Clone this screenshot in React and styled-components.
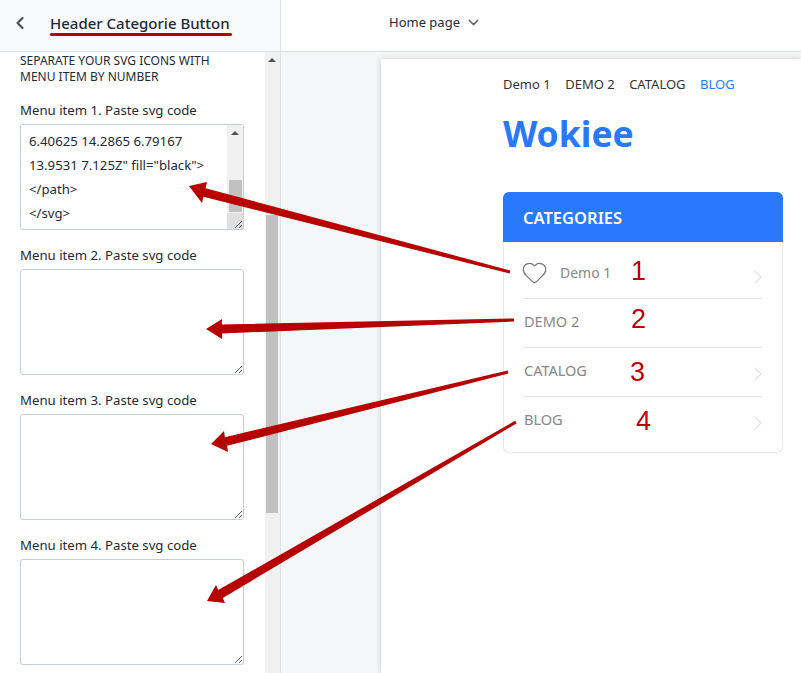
import React, { useEffect, useRef } from 'react'
import styled, { createGlobalStyle } from 'styled-components'
import { ChevronDown, ChevronLeft, ChevronRight, Heart } from 'lucide-react'

const svgCode = `<svg width="24" height="24"
viewBox="0 0 24 24" fill="none">
<path d="M13.9531 7.125C14.3021
6.79167 14.6771 6.5 15.0781
6.25C15.4792 6 15.9062 5.875
16.3594 5.875C16.8125 5.875
6.40625 14.2865 6.79167
13.9531 7.125Z" fill="black">
</path>
</svg>`

const menuItems = [
  { label: 'Demo 1', icon: true, arrow: true },
  { label: 'DEMO 2' },
  { label: 'CATALOG', arrow: true },
  { label: 'BLOG', arrow: true, last: true },
]

const numbers = [
  { value: 1, x: 631, y: 254 },
  { value: 2, x: 631, y: 302 },
  { value: 3, x: 630, y: 355 },
  { value: 4, x: 636, y: 404 },
]

// tip, tail and the two barbs of each hand drawn arrow
const arrows = [
  { tip: [189, 186], tail: [510, 272], barbs: [[207, 182], [202, 203]] },
  { tip: [206, 329], tail: [514, 320], barbs: [[222, 319], [222, 339]] },
  { tip: [211, 444], tail: [508, 372], barbs: [[224, 431], [228, 452]] },
  { tip: [207, 601], tail: [516, 422], barbs: [[216, 585], [225, 603]] },
]

const arrowPoints = ({ tip, tail, barbs }) => {
  const neck = [(barbs[0][0] + barbs[1][0]) / 2, (barbs[0][1] + barbs[1][1]) / 2]
  const dx = tail[0] - neck[0]
  const dy = tail[1] - neck[1]
  const len = Math.hypot(dx, dy)
  const nx = -dy / len
  const ny = dx / len
  const side = (p, w) => `${p[0] + nx * w},${p[1] + ny * w}`
  return [
    tip.join(','),
    barbs[0].join(','),
    side(neck, -4.5),
    side(tail, -1.5),
    side(tail, 1.5),
    side(neck, 4.5),
    barbs[1].join(','),
  ].join(' ')
}

const App = () => {
  const codeRef = useRef(null)

  useEffect(() => {
    codeRef.current.scrollTop = codeRef.current.scrollHeight
  }, [])

  return (
    <Screen>
      <GlobalStyle />
      <Sidebar>
        <SidebarHeader>
          <ChevronLeft size={20} strokeWidth={2.6} color='#454f5b' />
          <Title>Header Categorie Button</Title>
        </SidebarHeader>
        <SidebarBody>
          <Settings>
            <Hint>SEPARATE YOUR SVG ICONS WITH MENU ITEM BY NUMBER</Hint>
            {[1, 2, 3, 4].map((num) => (
              <Field key={num}>
                <label>Menu item {num}. Paste svg code</label>
                {num === 1 ? (
                  <CodeWrap>
                    <CodeBox ref={codeRef} defaultValue={svgCode} wrap='off' />
                    <CodeScroll>
                      <CodeArrow />
                      <CodeThumb />
                    </CodeScroll>
                    <CodeCorner />
                  </CodeWrap>
                ) : (
                  <CodeBox />
                )}
              </Field>
            ))}
          </Settings>
          <Track>
            <UpArrow />
            <Thumb />
          </Track>
        </SidebarBody>
      </Sidebar>

      <Main>
        <TopBar>
          <span>Home page</span>
          <ChevronDown size={17} color='#5c6a79' />
        </TopBar>
        <Canvas>
          <Page>
            <Nav>
              <a>Demo 1</a>
              <a>DEMO 2</a>
              <a>CATALOG</a>
              <NavActive>BLOG</NavActive>
            </Nav>
            <Logo>Wokiee</Logo>
            <Card>
              <CardHeader>CATEGORIES</CardHeader>
              <Menu>
                {menuItems.map((item) => (
                  <MenuRow key={item.label} $last={item.last} $icon={item.icon}>
                    {item.icon && <Heart size={27} strokeWidth={1.1} color='#777' />}
                    <MenuLabel $icon={item.icon}>{item.label}</MenuLabel>
                    {item.arrow && <RowArrow size={24} strokeWidth={1.1} />}
                  </MenuRow>
                ))}
              </Menu>
            </Card>
          </Page>
        </Canvas>
      </Main>

      <Annotations viewBox='0 0 801 673'>
        {arrows.map((arrow, i) => (
          <polygon key={i} points={arrowPoints(arrow)} fill='#b70000' />
        ))}
      </Annotations>
      {numbers.map((n) => (
        <Number key={n.value} $x={n.x} $y={n.y}>
          {n.value}
        </Number>
      ))}
    </Screen>
  )
}

const GlobalStyle = createGlobalStyle`
  html, body {
    margin: 0;
    padding: 0;
    background: #fff;
  }
  * {
    box-sizing: border-box;
  }
`

const Screen = styled.div`
  position: relative;
  display: flex;
  width: 801px;
  height: 673px;
  overflow: hidden;
  font-family: 'Noto Sans', sans-serif;
  color: #212b36;
`

const Sidebar = styled.aside`
  display: flex;
  flex-direction: column;
  width: 281px;
  flex-shrink: 0;
  border-right: 1px solid #dfe3e8;
`

const SidebarHeader = styled.header`
  display: flex;
  align-items: center;
  gap: 20px;
  height: 52px;
  padding: 0 0 5px 10px;
  background: #f9fafb;
  border-bottom: 1px solid #dfe3e8;
`

const Title = styled.h1`
  position: relative;
  margin: 0;
  font-size: 15px;
  font-weight: 500;
  white-space: nowrap;
  &::after {
    content: '';
    position: absolute;
    left: 0;
    right: -2px;
    bottom: -3px;
    height: 3px;
    border-radius: 2px;
    background: #b70000;
  }
`

const SidebarBody = styled.div`
  display: flex;
  flex: 1;
  min-height: 0;
`

const Settings = styled.div`
  display: flex;
  flex-direction: column;
  gap: 15px;
  width: 265px;
  padding: 1px 20px 0;
`

const Hint = styled.p`
  max-width: 215px;
  margin: 0;
  font-size: 12px;
  line-height: 16px;
`

const Field = styled.div`
  display: flex;
  flex-direction: column;
  gap: 4px;
  label {
    font-size: 13.2px;
    line-height: 20px;
  }
`

const CodeWrap = styled.div`
  position: relative;
  width: 224px;
  height: 106px;
`

const CodeBox = styled.textarea`
  display: block;
  width: 224px;
  height: 106px;
  padding: 4px 8px;
  border: 1px solid #c4cdd5;
  border-radius: 3px;
  font-family: 'Noto Sans', sans-serif;
  font-size: 13.2px;
  line-height: 24px;
  color: #212b36;
  background: #fff;
  outline: none;
  overflow-y: hidden;
`

// the browser hides native scrollbars here, so the inner one is drawn over the box
const CodeScroll = styled.div`
  position: absolute;
  top: 1px;
  right: 1px;
  display: flex;
  flex-direction: column;
  align-items: center;
  width: 16px;
  height: 88px;
  background: #f1f1f1;
  pointer-events: none;
`

const CodeArrow = styled.span`
  margin-top: 6px;
  border-left: 4px solid transparent;
  border-right: 4px solid transparent;
  border-bottom: 4px solid #505050;
`

const CodeThumb = styled.span`
  width: 13px;
  height: 32px;
  margin-top: 45px;
  background: #c1c1c1;
`

const CodeCorner = styled.span`
  position: absolute;
  right: 1px;
  bottom: 1px;
  width: 16px;
  height: 16px;
  background: rgba(0, 0, 0, 0.12);
  pointer-events: none;
`

const Track = styled.div`
  display: flex;
  flex-direction: column;
  align-items: flex-start;
  width: 15px;
  padding-left: 1px;
  background: #f1f1f1;
`

const UpArrow = styled.span`
  margin: 6px 0 0 2px;
  border-left: 4px solid transparent;
  border-right: 4px solid transparent;
  border-bottom: 4px solid #505050;
`

const Thumb = styled.span`
  width: 12px;
  height: 298px;
  margin-top: 153px;
  background: #c1c1c1;
`

const Main = styled.main`
  display: flex;
  flex-direction: column;
  flex: 1;
  min-width: 0;
`

const TopBar = styled.div`
  display: flex;
  align-items: center;
  gap: 5px;
  height: 52px;
  padding: 0 0 7px 108px;
  font-size: 13px;
  border-bottom: 1px solid #dcdfe3;
`

const Canvas = styled.div`
  flex: 1;
  min-height: 0;
  padding: 7px 0 0 100px;
  background: #f4f6f8;
`

const Page = styled.div`
  height: 100%;
  padding: 16px 18px 0 122px;
  background: #fff;
  box-shadow: 0 0 6px rgba(0, 0, 0, 0.18);
`

const Nav = styled.nav`
  display: flex;
  gap: 14.5px;
  font-size: 13px;
  line-height: 18px;
  color: #333;
`

const NavActive = styled.a`
  color: #2979ff;
`

const Logo = styled.div`
  margin-top: 15px;
  font-size: 35.5px;
  line-height: 50px;
  font-weight: 700;
  color: #2979ff;
`

const Card = styled.section`
  width: 280px;
  margin-top: 34px;
  border-radius: 6px;
`

const CardHeader = styled.h2`
  display: flex;
  align-items: center;
  height: 50px;
  margin: 0;
  padding-left: 20px;
  border-radius: 6px 6px 0 0;
  background: #2979ff;
  color: #fff;
  font-size: 16.5px;
  font-weight: 600;
`

const Menu = styled.ul`
  margin: 0;
  padding: 0 20px;
  list-style: none;
  border: 1px solid #e8e8e8;
  border-top: none;
  border-radius: 0 0 6px 6px;
`

const MenuRow = styled.li`
  display: flex;
  align-items: center;
  height: ${({ $last, $icon }) => ($last ? '55px' : $icon ? '57px' : '49px')};
  padding-top: ${({ $icon }) => ($icon ? '5px' : '0')};
  padding-bottom: ${({ $last, $icon }) => ($last ? '11px' : $icon ? '0' : '4px')};
  border-bottom: ${({ $last }) => ($last ? 'none' : '1px solid #e6e6e6')};
  svg:first-child {
    margin-left: -3px;
  }
`

const MenuLabel = styled.span`
  margin-left: ${({ $icon }) => ($icon ? '12px' : '0')};
  font-size: ${({ $icon }) => ($icon ? '14px' : '14.5px')};
  color: #888;
`

const RowArrow = styled(ChevronRight)`
  margin-left: auto;
  margin-right: -8px;
  color: #e0e0e0;
  transform: translateY(4px);
`

const Annotations = styled.svg`
  position: absolute;
  inset: 0;
  width: 801px;
  height: 673px;
  pointer-events: none;
`

const Number = styled.span`
  position: absolute;
  left: ${({ $x }) => $x}px;
  top: ${({ $y }) => $y}px;
  font-family: 'Liberation Sans', sans-serif;
  font-size: 27px;
  line-height: 34px;
  color: #bf0000;
`

export default App
